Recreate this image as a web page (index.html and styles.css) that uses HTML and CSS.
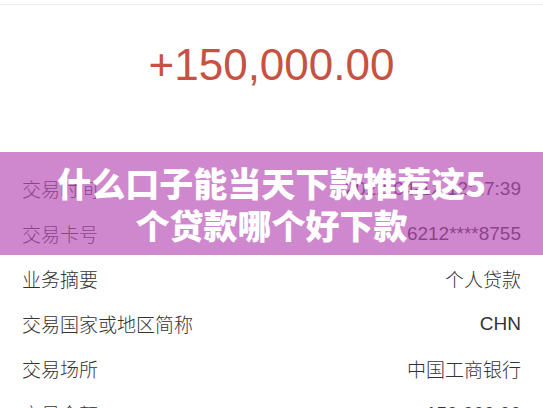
FILE: index.html
```html
<!DOCTYPE html>
<html lang="zh">
<head>
<meta charset="utf-8">
<link rel="stylesheet" href="styles.css">
</head>
<body>
<div class="page">
  <div class="topbar"></div>
  <div class="amount-box">
    <div class="amount">+150,000.00</div>
  </div>
  <div class="rows">
    <div class="row"><span class="label">交易时间</span><span class="value">2022-04-12 12:17:39</span></div>
    <div class="row"><span class="label">交易卡号</span><span class="value">6212****8755</span></div>
    <div class="row"><span class="label">业务摘要</span><span class="value">个人贷款</span></div>
    <div class="row"><span class="label">交易国家或地区简称</span><span class="value">CHN</span></div>
    <div class="row"><span class="label">交易场所</span><span class="value">中国工商银行</span></div>
    <div class="row"><span class="label">交易金额</span><span class="value">150,000.00</span></div>
  </div>
  <div class="banner">
    <h1 class="title">什么口子能当天下款推荐这5<br>个贷款哪个好下款</h1>
  </div>
</div>
</body>
</html>
```
FILE: styles.css
```css
html, body {
  margin: 0;
  padding: 0;
  background: #fff;
}
body {
  width: 543px;
  height: 408px;
  overflow: hidden;
  font-family: "Liberation Sans", "Noto Sans CJK SC", sans-serif;
}
.page {
  position: relative;
  height: 408px;
  overflow: hidden;
}
.topbar {
  height: 4px;
  border-bottom: 1px solid #ececec;
}
.amount-box {
  height: 161px;
  display: flex;
  justify-content: center;
}
.amount {
  margin-top: 35px;
  font-size: 44px;
  line-height: 50px;
  color: #c65243;
}
.rows {
  padding: 0 22px;
}
.row {
  height: 45px;
  display: flex;
  justify-content: space-between;
  align-items: center;
  font-size: 19px;
  color: #333;
}
.label,
.value {
  font-family: "Liberation Sans", "Noto Sans CJK SC", sans-serif;
  font-weight: 300;
}
.banner {
  position: absolute;
  left: 0;
  right: 0;
  top: 152px;
  height: 103px;
  background: rgba(184, 76, 181, 0.67);
  display: flex;
  align-items: center;
  justify-content: center;
}
.title {
  margin: 0;
  font-family: "Noto Sans CJK SC", sans-serif;
  font-weight: 900;
  font-size: 34px;
  line-height: 42px;
  color: #fff;
  text-align: center;
}
```
